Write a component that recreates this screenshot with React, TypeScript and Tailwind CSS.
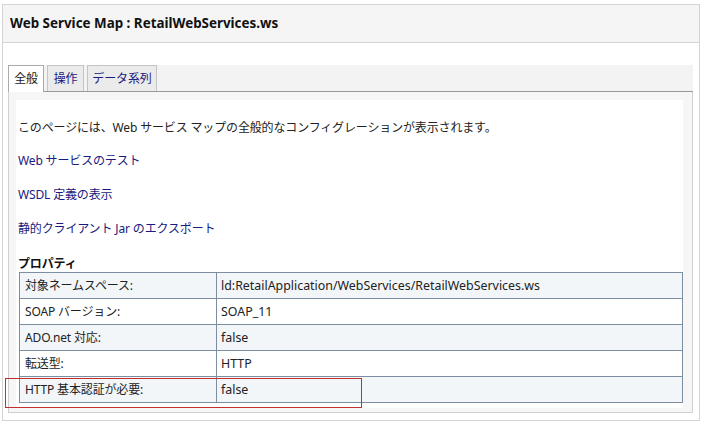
import React from "react";

const font = { fontFamily: '"Noto Sans", "Noto Sans CJK JP", sans-serif' };

const rows: [string, string][] = [
  ["対象ネームスペース:", "ld:RetailApplication/WebServices/RetailWebServices.ws"],
  ["SOAP バージョン:", "SOAP_11"],
  ["ADO.net 対応:", "false"],
  ["転送型:", "HTTP"],
  ["HTTP 基本認証が必要:", "false"],
];

export default function App() {
  return (
    <div
      className="relative w-[707px] h-[427px] bg-white pt-[4px] pl-[2px] text-[12px] text-[#222] tracking-[-0.15px]"
      style={font}
    >
      <div className="w-[698px] h-[417px] border border-[#d4d4d4] flex flex-col">
        <div className="h-[38px] shrink-0 bg-[#f5f5f5] border-b border-[#d4d4d4] flex items-center pl-[7px] text-[13.4px] font-bold text-[#111] tracking-normal">
          Web Service Map : RetailWebServices.ws
        </div>
        <div className="ml-[5px] mr-[6px] mt-[22px] flex flex-col">
          <div className="h-[27px] bg-[#f3f3f3] border-b border-[#999] flex items-end gap-[3px]">
            <div className="h-[27px] -mb-px w-[36px] bg-white border border-b-0 border-[#aaa] flex items-center justify-center">
              全般
            </div>
            <div className="h-[26px] w-[37px] bg-[#ebebeb] border border-b-0 border-[#c4c4c4] flex items-center justify-center text-[#1a1a80]">
              操作
            </div>
            <div className="h-[26px] w-[70px] bg-[#ebebeb] border border-b-0 border-[#c4c4c4] flex items-center justify-center text-[#1a1a80]">
              データ系列
            </div>
          </div>
          <div className="h-[321px] border-x border-b border-[#d0d0d0] bg-[#f6f6f6] pl-[7px] pr-[9px] pt-[8px] pb-[4px]">
            <div className="h-full bg-white flex flex-col pt-[20px] pl-[2px]">
              <div className="h-[16px] leading-[16px]">
                このページには、Web サービス マップの全般的なコンフィグレーションが表示されます。
              </div>
              <div className="h-[16px] leading-[16px] mt-[17px] text-[#1a1a80]">Web サービスのテスト</div>
              <div className="h-[16px] leading-[16px] mt-[18px] text-[#1a1a80]">WSDL 定義の表示</div>
              <div className="h-[16px] leading-[16px] mt-[18px] text-[#1a1a80]">静的クライアント Jar のエクスポート</div>
              <div className="h-[16px] leading-[16px] mt-[19px] font-bold text-[#111]">プロパティ</div>
              <table className="border-collapse w-[664px] ml-px">
                <tbody>
                  {rows.map(([k, v], i) => (
                    <tr key={i} className={i % 2 === 0 ? "bg-[#f3f6f9]" : "bg-white"}>
                      <td className="h-[26px] w-[197px] border border-[#7e8ea2] pl-[5px] p-0 leading-[14px]">{k}</td>
                      <td className="h-[26px] border border-[#7e8ea2] pl-[4px] p-0 leading-[14px] text-[12.4px] tracking-normal">{v}</td>
                    </tr>
                  ))}
                </tbody>
              </table>
            </div>
          </div>
        </div>
      </div>
      <div className="absolute left-[5px] top-[378px] w-[357px] h-[30px] border-[1.5px] border-[#c0302f]" />
    </div>
  );
}
